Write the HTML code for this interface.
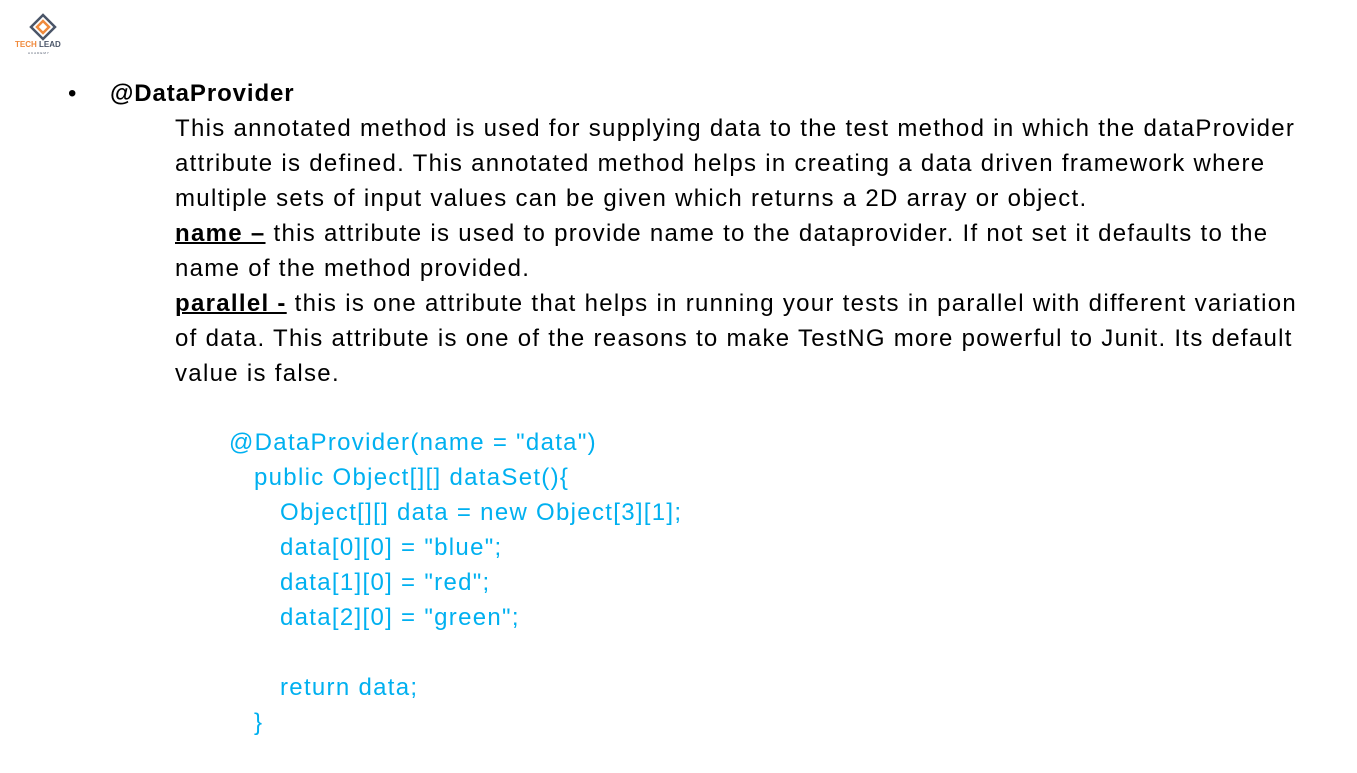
<!DOCTYPE html>
<html><head><meta charset="utf-8"><style>
body{margin:0;width:1357px;height:773px;background:#fff;position:relative;overflow:hidden;font-family:"Liberation Sans",sans-serif;color:#000}
.l{position:absolute;white-space:nowrap;font-size:24px;line-height:35px;letter-spacing:1.3px}
.c{color:#00b0f0}
b u{text-decoration-thickness:2px}
</style></head><body>
<svg style="position:absolute;left:14px;top:12px" width="60" height="44" viewBox="0 0 60 44">
<path d="M29 3 L41 15 L29 27 L17 15 Z" fill="none" stroke="#4a5568" stroke-width="2.5"/>
<path d="M29 9 L35 15 L29 21 L23 15 Z" fill="none" stroke="#f08a3c" stroke-width="2.5"/>
<text x="1" y="35" font-family="Liberation Sans" font-weight="bold" font-size="8" fill="#f08a3c">TECH <tspan fill="#4a5568">LEAD</tspan></text>
<text x="14" y="42" font-family="Liberation Sans" font-size="3" fill="#4a5568" letter-spacing="1">ACADEMY</text>
</svg>
<div class="l" style="left:68px;top:76px">•</div>
<div class="l" style="left:110px;top:76px;font-weight:bold;letter-spacing:0.9px">@DataProvider</div>
<div class="l" style="left:175px;top:111px">This annotated method is used for supplying data to the test method in which the dataProvider</div>
<div class="l" style="left:175px;top:146px">attribute is defined. This annotated method helps in creating a data driven framework where</div>
<div class="l" style="left:175px;top:181px">multiple sets of input values can be given which returns a 2D array or object.</div>
<div class="l" style="left:175px;top:216px"><b><u>name –</u></b> this attribute is used to provide name to the dataprovider. If not set it defaults to the</div>
<div class="l" style="left:175px;top:251px">name of the method provided.</div>
<div class="l" style="left:175px;top:286px"><b><u>parallel -</u></b> this is one attribute that helps in running your tests in parallel with different variation</div>
<div class="l" style="left:175px;top:321px">of data. This attribute is one of the reasons to make TestNG more powerful to Junit. Its default</div>
<div class="l" style="left:175px;top:356px">value is false.</div>
<div class="l c" style="left:229px;top:425px">@DataProvider(name = "data")</div>
<div class="l c" style="left:254px;top:460px">public Object[][] dataSet(){</div>
<div class="l c" style="left:280px;top:495px">Object[][] data = new Object[3][1];</div>
<div class="l c" style="left:280px;top:530px">data[0][0] = "blue";</div>
<div class="l c" style="left:280px;top:565px">data[1][0] = "red";</div>
<div class="l c" style="left:280px;top:600px">data[2][0] = "green";</div>
<div class="l c" style="left:280px;top:670px">return data;</div>
<div class="l c" style="left:254px;top:705px">}</div>
</body></html>
